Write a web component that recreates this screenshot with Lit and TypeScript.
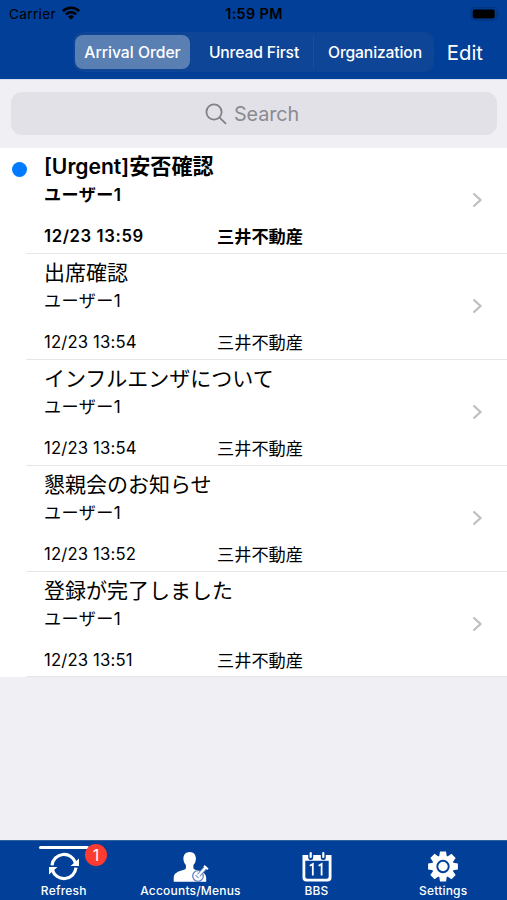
import { LitElement, html, css, svg } from "lit";
import { customElement, property } from "lit/decorators.js";
import { classMap } from "lit/directives/class-map.js";

interface Message {
  title: string;
  user: string;
  date: string;
  org: string;
  unread?: boolean;
}

const messages: Message[] = [
  { title: "[Urgent]安否確認", user: "ユーザー1", date: "12/23 13:59", org: "三井不動産", unread: true },
  { title: "出席確認", user: "ユーザー1", date: "12/23 13:54", org: "三井不動産" },
  { title: "インフルエンザについて", user: "ユーザー1", date: "12/23 13:54", org: "三井不動産" },
  { title: "懇親会のお知らせ", user: "ユーザー1", date: "12/23 13:52", org: "三井不動産" },
  { title: "登録が完了しました", user: "ユーザー1", date: "12/23 13:51", org: "三井不動産" },
];

const icons: Record<string, unknown> = {
  refresh: svg`
    <g fill="none" stroke="#fff" stroke-width="3.2">
      <path d="M6 17.300A12.100 12.100 0 0 1 29.600 15"/>
      <path d="M30 19.700A12.100 12.100 0 0 1 6.400 22"/>
    </g>
    <path fill="#fff" d="M33 10.500V18H24.500zM3 26.500V19H11.500z"/>`,
  accounts: svg`
    <path fill="#fff" d="M16.700 4c3.900 0 6.200 2.800 6.200 6.600 0 2.700-.9 5-2.500 6.500v2.600c0 1.400 1.300 1.800 3 2.400 5.600 1.900 9.800 3.100 9.800 8.100v3.500H.7v-3.500c0-5 3.600-6.200 9.200-8.100 1.700-.6 3-1 3-2.400v-2.600c-1.500-1.500-2.500-3.800-2.500-6.500C10.400 6.800 12.800 4 16.700 4z"/>
    <circle cx="25" cy="28" r="5.300" fill="#fff" stroke="#6486bf" stroke-width="1.300"/>
    <path d="M25.600 27.400L33 19.200" stroke="#6486bf" stroke-width="4"/>
    <path d="M25 28L33.300 18.800" stroke="#fff" stroke-width="2.200"/>
    <path d="M31 17.800l4 3.400M22.600 27l3.400 3.200" fill="none" stroke="#fff" stroke-width="1.800"/>
    <path d="M22.600 27.200l3 3" stroke="#7e9acb" stroke-width="1.200"/>`,
  bbs: svg`
    <path fill="#fff" fill-rule="evenodd" d="M3.500 7H32.500V29.500a4 4 0 0 1-4 4H7.500a4 4 0 0 1-4-4zM6.300 12.700V28.700a2 2 0 0 0 2 2H27.700a2 2 0 0 0 2-2V12.700z"/>
    <g stroke-linecap="round"><path d="M11.700 5.700V9.500M24.300 5.700V9.500" stroke="#013f98" stroke-width="5"/>
    <path d="M11.700 5V9M24.300 5V9" stroke="#fff" stroke-width="2.200"/></g>
    <path d="M10.800 17.800l3-1.800V27.500M19.600 17.800l3-1.800V27.500" fill="none" stroke="#fff" stroke-width="1.800"/>`,
  settings: svg`
    <g fill="#fff">
      ${[0, 45, 90, 135].map((a) => svg`<path d="M15 3.600h6l.8 5v19.800l-.8 5h-6l-.8-5V8.600z" transform="rotate(${a} 18 18.500)"/>`)}
      <circle cx="18" cy="18.500" r="11"/>
    </g>
    <circle cx="18" cy="18.500" r="5.700" fill="#fff" stroke="#013f98" stroke-width="1.900"/>`,
};

@customElement("status-bar")
class StatusBar extends LitElement {
  static styles = css`
    :host { display: grid; grid-template-columns: 1fr auto 1fr; align-items: center; height: 27px; padding: 0 7px 0 9px; color: #000; font-size: 13.600px; }
    .left { display: flex; align-items: center; gap: 6px; letter-spacing: 0.350px; }
    .left svg { margin-top: -2px; }
    .time { font-weight: 600; font-size: 14.300px; letter-spacing: 0.400px; margin-right: 1px; }
    .battery { justify-self: end; }
    svg { display: block; }
  `;
  render() {
    return html`
      <div class="left"><span>Carrier</span>
        <svg width="18" height="14" viewBox="0 0 18 14" fill="none" stroke="#000" stroke-width="2.500">
          <path d="M.9 5.200a11.500 11.500 0 0 1 16.200 0M3.900 8.400a7.200 7.200 0 0 1 10.200 0"/>
          <path d="M9 13.500L6 10.700a4.300 4.300 0 0 1 6 0z" fill="#000" stroke="none"/>
        </svg>
      </div>
      <span class="time">1:59 PM</span>
      <svg class="battery" width="30" height="14" viewBox="0 0 30 14">
        <rect x="1" y=".7" width="25.500" height="12.600" rx="3.800" fill="none" stroke="#01347f" stroke-width="1.200"/>
        <rect x="2.700" y="2.500" width="22" height="9" rx="2" fill="#000"/>
        <path d="M28 5v4c1.600-.6 1.600-3.400 0-4z" fill="#01347f"/>
      </svg>`;
  }
}

@customElement("nav-bar")
class NavBar extends LitElement {
  static styles = css`
    :host { display: flex; align-items: center; height: 50px; padding: 0 24px 0 73px; color: #fff; }
    .segments { display: flex; align-items: center; width: 362px; height: 40px; border-radius: 10px; background: #0e4596; font-size: 15.700px; font-weight: 500; }
    .segment { display: flex; align-items: center; justify-content: center; height: 34px; white-space: nowrap; }
    .first { width: 115px; margin-left: 2px; border-radius: 8px; background: #5a7fb3; }
    .second { width: 124px; padding-left: 4px; box-sizing: border-box; letter-spacing: -0.150px; }
    .third { width: 120px; padding-left: 2px; box-sizing: border-box; box-shadow: -1px 0 #1b4f9c; letter-spacing: -0.150px; }
    .edit { margin-left: 12.500px; font-size: 20.300px; line-height: 50px; padding-top: 1px; }
  `;
  render() {
    return html`
      <div class="segments">
        <div class="segment first">Arrival Order</div>
        <div class="segment second">Unread First</div>
        <div class="segment third">Organization</div>
      </div>
      <span class="edit">Edit</span>`;
  }
}

@customElement("search-field")
class SearchField extends LitElement {
  static styles = css`
    :host { display: block; box-sizing: border-box; height: 69px; padding: 12px 10px 0 11px; background: #f0eff4; border-top: 1px solid #d4e0ef; }
    .box { display: flex; align-items: center; justify-content: center; gap: 7px; height: 43px; padding-right: 4px; border-radius: 11px; background: #e2e1e7; color: #8b8a91; font-size: 19.800px; letter-spacing: -0.100px; }
    svg { display: block; }
  `;
  render() {
    return html`<div class="box">
      <svg width="22" height="22" viewBox="0 0 22 22" fill="none" stroke="#828188" stroke-width="1.800" stroke-linecap="round">
        <circle cx="9" cy="9" r="7.600"/><path d="M14.600 14.600L20.500 20.400"/>
      </svg>
      <span>Search</span>
    </div>`;
  }
}

@customElement("message-row")
class MessageRow extends LitElement {
  @property({ attribute: false }) message!: Message;
  static styles = css`
    :host { display: block; height: 105.900px; background: #fff; color: #000; }
    .row { display: grid; grid-template-columns: 26px 1fr 35px; height: 100%; }
    .dot { width: 15px; height: 15px; margin: 14px 0 0 12px; border-radius: 50%; background: #007aff; }
    .body { padding-left: 18px; white-space: nowrap; }
    .side { display: flex; align-items: center; padding-bottom: 1px; }
    .body, .side { border-bottom: 1px solid #e6e6e8; }
    .title { height: 31px; font-size: 21px; line-height: 37px; }
    .user { height: 30px; font-size: 17.100px; line-height: 32px; letter-spacing: 0.400px; }
    .meta { display: grid; grid-template-columns: 173px 1fr; font-size: 17.200px; line-height: 55px; height: 42px; }
    .date { font-size: 16.700px; letter-spacing: 0.150px; }
    .unread .title, .unread .meta, .unread .user { font-weight: 600; }
    .unread .title { font-size: 21.100px; }
    .unread .date { letter-spacing: 0.600px; }
  `;
  render() {
    const m = this.message;
    return html`<div class=${classMap({ row: true, unread: !!m.unread })}>
      <div>${m.unread ? html`<div class="dot"></div>` : ""}</div>
      <div class="body">
        <div class="title">${m.title}</div>
        <div class="user">${m.user}</div>
        <div class="meta"><span class="date">${m.date}</span><span>${m.org}</span></div>
      </div>
      <div class="side">
        <svg width="12" height="16" viewBox="0 0 12 16" fill="none" stroke="#bebec0" stroke-width="2.200"><path d="M1.500 1.500L8.500 8L1.500 14.500"/></svg>
      </div>
    </div>`;
  }
}

@customElement("tab-item")
class TabItem extends LitElement {
  @property() icon = "";
  @property() label = "";
  @property() badge = "";
  @property({ type: Boolean }) selected = false;
  static styles = css`
    :host { display: flex; flex-direction: column; align-items: center; position: relative; padding-top: 7px; color: #fff; }
    svg { display: block; width: 36px; height: 36px; }
    .label { font-size: 12px; font-weight: 500; line-height: 14px; letter-spacing: 0.200px; white-space: nowrap; }
    .marker { position: absolute; top: 5px; left: 39px; width: 50px; height: 3px; border-radius: 2px; background: #fff; }
    .badge { position: absolute; top: 3px; left: 85px; width: 22px; height: 22px; border-radius: 50%; background: #fe3b30; font-size: 16px; line-height: 22px; text-align: center; }
  `;
  render() {
    return html`
      ${this.selected ? html`<div class="marker"></div>` : ""}
      <svg viewBox="0 0 36 36">${icons[this.icon]}</svg>
      <span class="label">${this.label}</span>
      ${this.badge ? html`<span class="badge">${this.badge}</span>` : ""}`;
  }
}

@customElement("app-root")
class AppRoot extends LitElement {
  static styles = css`
    :host { display: flex; flex-direction: column; width: 507px; height: 900px; overflow: hidden; background: #f0eff4; font-family: Inter, "Noto Sans CJK JP", sans-serif; }
    .header { height: 79px; background: #013f98; }
    .list { flex: 1; }
    .tabs { display: grid; grid-template-columns: 127.500px 126px 126px 127.500px; box-sizing: border-box; height: 60px; background: #013f98; border-top: 1px solid #2f609f; }
  `;
  render() {
    return html`
      <div class="header"><status-bar></status-bar><nav-bar></nav-bar></div>
      <search-field></search-field>
      <div class="list">${messages.map((m) => html`<message-row .message=${m}></message-row>`)}</div>
      <div class="tabs">
        <tab-item icon="refresh" label="Refresh" badge="1" selected></tab-item>
        <tab-item icon="accounts" label="Accounts/Menus"></tab-item>
        <tab-item icon="bbs" label="BBS"></tab-item>
        <tab-item icon="settings" label="Settings"></tab-item>
      </div>`;
  }
}
